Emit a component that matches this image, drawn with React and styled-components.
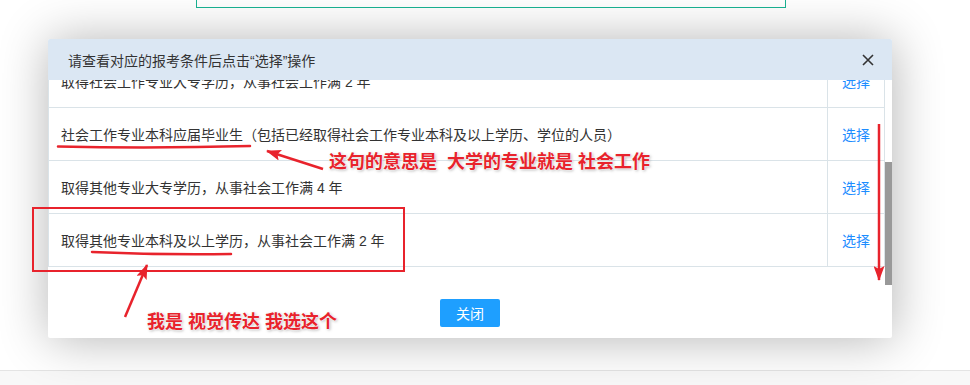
import React, { useLayoutEffect, useRef } from "react";
import styled, { createGlobalStyle } from "styled-components";

const GlobalStyle = createGlobalStyle`
  html, body {
    margin: 0;
    padding: 0;
    background: #ffffff;
    font-family: "Liberation Sans", "Noto Sans CJK SC", sans-serif;
  }
`;

const Page = styled.div`
  position: relative;
  width: 970px;
  height: 385px;
  overflow: hidden;
  display: flex;
  flex-direction: column;
  background: #ffffff;
`;

const TopBox = styled.div`
  margin-left: 196px;
  width: 590px;
  height: 8px;
  box-sizing: border-box;
  border: 1px solid #19b393;
  border-top: none;
  background: #ffffff;
`;

const Spacer = styled.div`
  flex: 1;
`;

const PageFooter = styled.div`
  height: 14px;
  border-top: 1px solid #e4e4e4;
  background: #f8f8f8;
`;

const Dialog = styled.div`
  position: absolute;
  left: 48px;
  top: 39px;
  width: 844px;
  height: 299px;
  background: #ffffff;
  box-shadow: 1px 1px 50px rgba(0, 0, 0, 0.3);
  border-radius: 2px;
  display: flex;
  flex-direction: column;
  overflow: hidden;
`;

const Header = styled.div`
  height: 41px;
  flex: none;
  background: #dbe7f3;
  display: flex;
  align-items: center;
  justify-content: space-between;
  padding: 0 17px 0 20px;
  font-size: 14px;
  color: #333333;
`;

const CloseButton = styled.span`
  display: flex;
  width: 14px;
  height: 14px;
`;

const Body = styled.div`
  height: 205px;
  flex: none;
  display: flex;
`;

const Viewport = styled.div`
  flex: 1;
  overflow: hidden;
`;

const ScrollTrack = styled.div`
  width: 7px;
  flex: none;
  background: #ffffff;
  display: flex;
  flex-direction: column;
  justify-content: flex-end;
`;

const ScrollThumb = styled.div`
  height: 123px;
  background: #999999;
`;

const Table = styled.div`
  padding: 5px 0 18px;
`;

const Row = styled.div`
  display: grid;
  grid-template-columns: 1fr 57px;
  height: 52px;
  border-bottom: 1px solid #dae3e8;
  border-left: 1px solid #dae3e8;
  border-right: 1px solid #dae3e8;
  &:first-child {
    border-top: 1px solid #dae3e8;
  }
`;

const Cond = styled.div`
  display: flex;
  align-items: center;
  padding-left: 12px;
  font-size: 14px;
  color: #333333;
  white-space: nowrap;
`;

const Action = styled.div`
  display: flex;
  align-items: center;
  justify-content: center;
  border-left: 1px solid #dae3e8;
  font-size: 14px;
  color: #1d8dff;
`;

const Footer = styled.div`
  flex: 1;
  display: flex;
  justify-content: center;
  padding-top: 14px;
`;

const Button = styled.div`
  width: 60px;
  height: 28px;
  border-radius: 2px;
  background: #1e9fff;
  color: #ffffff;
  font-size: 14px;
  display: flex;
  align-items: center;
  justify-content: center;
`;

const Overlay = styled.div`
  position: absolute;
  inset: 0;
  pointer-events: none;
`;

const Note = styled.span`
  position: absolute;
  left: ${(p) => p.$x}px;
  top: ${(p) => p.$y}px;
  font-size: 18px;
  line-height: 18px;
  font-weight: 700;
  color: #e8232c;
  white-space: pre;
  text-shadow: 0 0 2px #ffffff, 0 0 2px #ffffff, 1px 1px 3px rgba(0, 0, 0, 0.35);
`;

const rows = [
  "社会工作专业大专应届毕业生（包括已经取得社会工作专业大专学历的人员）",
  "取得社会工作专业中专学历，从事社会工作满 4 年",
  "取得社会工作专业大专学历，从事社会工作满 2 年",
  "社会工作专业本科应届毕业生（包括已经取得社会工作专业本科及以上学历、学位的人员）",
  "取得其他专业大专学历，从事社会工作满 4 年",
  "取得其他专业本科及以上学历，从事社会工作满 2 年",
];

const RED = "#e8232c";

export default function App() {
  const viewRef = useRef(null);
  useLayoutEffect(() => {
    if (viewRef.current) {
      viewRef.current.scrollTop = viewRef.current.scrollHeight;
    }
  }, []);

  return (
    <>
      <GlobalStyle />
      <Page>
        <TopBox />
        <Spacer />
        <PageFooter />
        <Dialog>
          <Header>
            <span>请查看对应的报考条件后点击“选择”操作</span>
            <CloseButton>
              <svg width="14" height="14" viewBox="0 0 14 14">
                <path d="M2 2 L12 12 M12 2 L2 12" stroke="#333" strokeWidth="1.6" fill="none" />
              </svg>
            </CloseButton>
          </Header>
          <Body>
            <Viewport ref={viewRef}>
              <Table>
                {rows.map((r) => (
                  <Row key={r}>
                    <Cond>{r}</Cond>
                    <Action>选择</Action>
                  </Row>
                ))}
              </Table>
            </Viewport>
            <ScrollTrack>
              <ScrollThumb />
            </ScrollTrack>
          </Body>
          <Footer>
            <Button>关闭</Button>
          </Footer>
        </Dialog>
        <Overlay>
          <svg width="970" height="385" viewBox="0 0 970 385">
            <defs>
              <marker
                id="head"
                markerUnits="userSpaceOnUse"
                markerWidth="15"
                markerHeight="11"
                viewBox="0 0 15 11"
                refX="14"
                refY="5.5"
                orient="auto"
              >
                <path d="M0 0 L15 5.5 L0 11 L3 5.5 Z" fill={RED} />
              </marker>
            </defs>
            <path d="M58 146.5 Q154 148.5 250 146" stroke={RED} strokeWidth="2.5" fill="none" strokeLinecap="round" />
            <line x1="323" y1="169" x2="267" y2="151" stroke={RED} strokeWidth="2.5" markerEnd="url(#head)" />
            <rect x="33" y="208" width="371" height="63" stroke={RED} strokeWidth="2" fill="none" />
            <path d="M92 252 Q160 255 231 254" stroke={RED} strokeWidth="2.5" fill="none" strokeLinecap="round" />
            <line x1="125" y1="317" x2="147" y2="265" stroke={RED} strokeWidth="2.5" markerEnd="url(#head)" />
            <line x1="879" y1="124" x2="879" y2="280" stroke={RED} strokeWidth="2.5" markerEnd="url(#head)" />
          </svg>
          <Note $x={329} $y={153}>这句的意思是  大学的专业就是 社会工作</Note>
          <Note $x={147} $y={313}>我是 视觉传达 我选这个</Note>
        </Overlay>
      </Page>
    </>
  );
}
